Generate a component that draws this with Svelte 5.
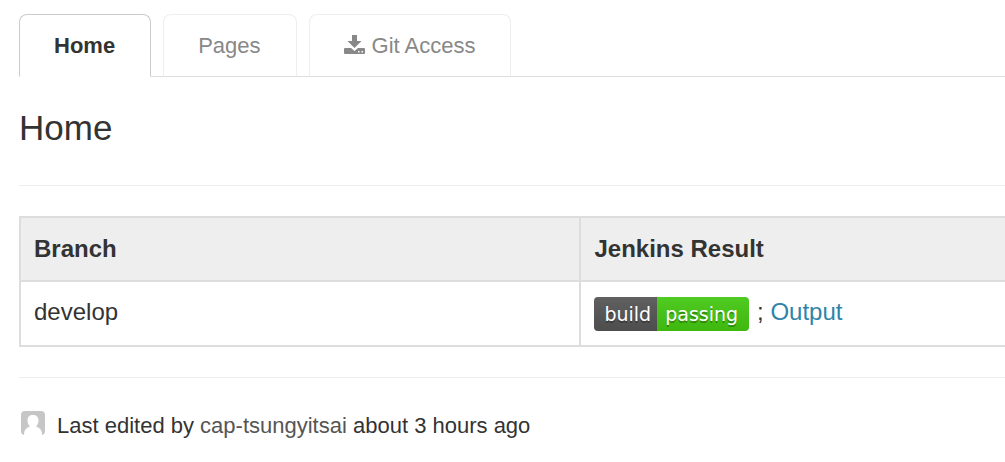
<script>
  const tabs = [
    { label: 'Home', active: true },
    { label: 'Pages' },
    { label: 'Git Access', download: true }
  ];
</script>

<main>
  <nav aria-label="Wiki">
    {#each tabs as tab}
      <a href="#wiki" class="tab" class:active={tab.active} aria-current={tab.active ? 'page' : undefined}>
        {#if tab.download}
          <svg class="download" viewBox="0 0 21 20" aria-hidden="true">
            <path d="M8 0h5v6h4.500l-7 7L3.500 6H8z" />
            <path fill-rule="evenodd" d="M1 13h6l3.500 3 3.500-3H20q1 0 1 1v4q0 1-1 1H1q-1 0-1-1v-4q0-1 1-1zM14 16v1.500h1.500V16zM17.500 16v1.500H19V16z" />
          </svg>
        {/if}
        <span>{tab.label}</span>
      </a>
    {/each}
  </nav>

  <h1>Home</h1>

  <section class="content">
    <table>
      <thead>
        <tr><th class="branch" scope="col">Branch</th><th scope="col">Jenkins Result</th></tr>
      </thead>
      <tbody>
        <tr>
          <td>develop</td>
          <td>
            <div class="result">
              <span class="badge"><span class="build">build</span><span class="passing">passing</span></span>
              <span>; <a class="output" href="#output">Output</a></span>
            </div>
          </td>
        </tr>
      </tbody>
    </table>
  </section>

  <footer>
    <svg class="avatar" viewBox="0 0 24 24" aria-hidden="true">
      <rect width="24" height="24" rx="4" fill="#c6c6c6" />
      <path d="M3 24C3 19 5 17 9 15.500C7 13.500 6.500 11.500 6.500 9.500C6.500 6 8.500 4 12 4S17.500 6 17.500 9.500C17.500 11.500 17 13.500 15 15.500C19 17 21 19 21 24Z" fill="#fff" />
    </svg>
    <p>Last edited by <a class="author" href="#author">cap-tsungyitsai</a> about 3 hours ago</p>
  </footer>
</main>

<style>
  :global(body) {
    background: #fff;
  }
  main {
    padding: 14px 0 20px 19px;
    overflow: hidden;
    color: #333;
    font-family: "Liberation Sans", Arial, sans-serif;
  }
  a {
    text-decoration: none;
  }
  nav {
    display: flex;
    gap: 12px;
    border-bottom: 1px solid #ddd;
  }
  .tab {
    display: flex;
    align-items: center;
    gap: 7px;
    padding: 15px 35px 15px 34px;
    margin-bottom: -1px;
    border: 1px solid #eee;
    border-bottom-color: #ddd;
    border-radius: 8px 8px 0 0;
    color: #888;
    font-size: 22px;
    line-height: 31px;
  }
  .active {
    background: #fff;
    border-color: #ccc;
    border-bottom-color: #fff;
    color: #333;
    font-weight: bold;
  }
  .download {
    width: 21px;
    height: 20px;
    margin-bottom: 2px;
    fill: #888;
  }
  h1 {
    margin: 31px 0 0;
    padding-bottom: 37px;
    border-bottom: 1px solid #eee;
    font-size: 35px;
    font-weight: normal;
    line-height: 40px;
  }
  .content {
    padding: 30px 0;
    border-bottom: 1px solid #eee;
  }
  table {
    width: calc(100% + 2px);
    border-collapse: collapse;
    table-layout: fixed;
    font-size: 24px;
    line-height: 38px;
  }
  th,
  td {
    padding: 12px 13px;
    border: 2px solid #ddd;
    text-align: left;
  }
  td {
    padding: 11px 13px 14px;
  }
  th {
    background: #eee;
  }
  .branch {
    width: 54%;
  }
  .result {
    display: flex;
    align-items: flex-end;
    gap: 8px;
  }
  .badge {
    display: flex;
    border-radius: 4px;
    overflow: hidden;
    color: #fff;
    font-family: "DejaVu Sans", sans-serif;
    font-size: 19px;
    line-height: 34px;
    text-shadow: 0 2px 0 rgba(1, 1, 1, 0.3);
  }
  .build {
    padding: 0 6px 0 10px;
    background: linear-gradient(#606060, #4d4d4d);
  }
  .passing {
    padding: 0 11px 0 8px;
    background: linear-gradient(#50cb22, #3eb70f);
  }
  .output {
    color: #3084a8;
  }
  footer {
    display: flex;
    align-items: flex-start;
    gap: 12px;
    padding: 33px 2px 0;
    font-size: 22px;
    line-height: 30px;
  }
  footer p {
    margin: 0;
  }
  .avatar {
    width: 24px;
    height: 24px;
  }
  .author {
    color: #555;
  }
</style>
